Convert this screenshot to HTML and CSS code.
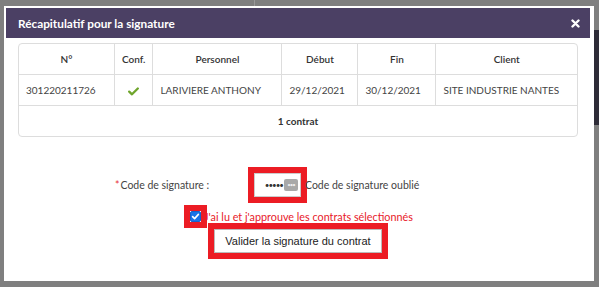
FILE: index.html
```html
<!DOCTYPE html>
<html lang="fr">
<head>
    <meta charset="UTF-8">
    <meta name="viewport" content="width=device-width, initial-scale=1.0">
    <title>Récapitulatif pour la signature</title>
    <link rel="stylesheet" href="styles.css">
</head>
<body>

    <div class="backdrop-strip"></div>
    <div class="side-dark"></div>

    <div class="modal">
        <div class="modal-header">
            <h4>Récapitulatif pour la signature</h4>
            <svg class="close" width="9" height="9" viewBox="0 0 9 9">
                <path d="M1.5 1.5 L7.5 7.5 M7.5 1.5 L1.5 7.5" stroke="#fff" stroke-width="2.4" stroke-linecap="round"/>
            </svg>
        </div>

        <div class="modal-body">
            <table class="recap">
                <thead>
                    <tr>
                        <th class="col-num">N°</th>
                        <th class="col-conf">Conf.</th>
                        <th class="col-pers">Personnel</th>
                        <th class="col-date">Début</th>
                        <th class="col-fin">Fin</th>
                        <th>Client</th>
                    </tr>
                </thead>
                <tbody>
                    <tr>
                        <td>301220211726</td>
                        <td class="center">
                            <svg class="check" width="11" height="9" viewBox="0 0 11 9">
                                <path d="M1.2 4.6 L4 7.3 L9.8 1.5" fill="none" stroke="#6fa52c" stroke-width="2.3" stroke-linecap="round" stroke-linejoin="round"/>
                            </svg>
                        </td>
                        <td>LARIVIERE ANTHONY</td>
                        <td>29/12/2021</td>
                        <td>30/12/2021</td>
                        <td>SITE INDUSTRIE NANTES</td>
                    </tr>
                </tbody>
                <tfoot>
                    <tr>
                        <td colspan="6" class="total">1 contrat</td>
                    </tr>
                </tfoot>
            </table>

            <div class="form-row">
                <label class="code-label"><span class="req">*</span>Code de signature :</label>
                <div class="code-input highlight">
                    <span class="dots">•••••</span>
                    <span class="key">•••</span>
                </div>
                <a class="forgot">Code de signature oublié</a>
            </div>

            <div class="check-row">
                <span class="checkbox highlight">
                    <svg width="11" height="11" viewBox="0 0 11 11">
                        <rect x="0.5" y="0.5" width="10" height="10" rx="1.5" fill="#1a73e8" stroke="#1a60c8"/>
                        <path d="M2.6 5.6 L4.6 7.6 L8.4 3.4" fill="none" stroke="#fff" stroke-width="1.6" stroke-linecap="round" stroke-linejoin="round"/>
                    </svg>
                </span>
                <span class="approve">J'ai lu et j'approuve les contrats sélectionnés</span>
            </div>

            <div class="btn-row">
                <button class="btn-valider highlight">Valider la signature du contrat</button>
            </div>
        </div>
    </div>

</body>
</html>
```

FILE: styles.css
```css
* {
    box-sizing: border-box;
    margin: 0;
    padding: 0;
}
body {
    position: relative;
    width: 599px;
    height: 287px;
    overflow: hidden;
    background: #7f7f7f;
    font-family: Lato, "Open Sans", sans-serif;
    color: #444;
    padding: 6px 0 0 4px;
}
.backdrop-strip {
    position: absolute;
    top: 0;
    left: 254px;
    width: 1px;
    height: 6px;
    background: #999;
}
.side-dark {
    position: absolute;
    top: 30px;
    left: 594px;
    width: 5px;
    height: 95px;
    background: #2e2c38;
}
.modal {
    position: relative;
    width: 590px;
    height: 275px;
    background: #fff;
    padding: 2px 4px 0 2px;
}
.modal-header {
    display: flex;
    align-items: center;
    justify-content: space-between;
    height: 30px;
    background: #4b4064;
    color: #fff;
    padding: 0 10px 0 12px;
}
.modal-header h4 {
    font-size: 11.8px;
    font-weight: 700;
}
.close {
    display: block;
}
.modal-body {
    padding: 5px 12px 0 12px;
}

/* tableau récapitulatif */
.recap {
    width: 560px;
    border-collapse: separate;
    border-spacing: 0;
    border: 1px solid #ddd;
    border-radius: 4px;
    font-size: 10px;
    color: #444;
}
.recap th, .recap td {
    height: 31px;
    padding: 0 7px;
    border-left: 1px solid #ddd;
    border-bottom: 1px solid #ddd;
    text-align: left;
    white-space: nowrap;
}
.recap th:first-child, .recap td:first-child {
    border-left: none;
}
.recap tfoot td {
    border-bottom: none;
    height: 30px;
}
.recap th {
    text-align: center;
    font-weight: 600;
    color: #333;
}
.col-num { width: 95px; }
.col-conf { width: 37px; }
.col-pers { width: 129px; }
.col-date { width: 76px; }
.col-fin { width: 78px; }
.center { text-align: center !important; }
.check { vertical-align: middle; }
.total {
    text-align: center !important;
    font-weight: 700;
    color: #333;
}

/* formulaire */
.highlight {
    outline: 6px solid #ec1c24;
    border-radius: 0 !important;
}
.form-row {
    display: flex;
    align-items: center;
    margin-top: 36px;
    height: 24px;
    font-size: 10.5px;
}
.code-label {
    width: 236px;
    padding-left: 97px;
    color: #444;
}
.req {
    color: #e8323a;
    margin-right: 1px;
}
.code-input {
    display: flex;
    align-items: center;
    justify-content: flex-end;
    width: 47px;
    height: 24px;
    border: 1px solid #ccc;
    padding-right: 2px;
    background: #fff;
}
.dots {
    font-size: 8px;
    letter-spacing: -1px;
    color: #333;
}
.key {
    display: inline-block;
    width: 14px;
    height: 12px;
    margin-left: 1px;
    background: #a9a9a9;
    border-radius: 2px;
    color: #eee;
    font-size: 6px;
    line-height: 12px;
    text-align: center;
    letter-spacing: -1px;
}
.forgot {
    margin-left: 4px;
    color: #444;
}
.check-row {
    display: flex;
    align-items: center;
    margin-top: 12px;
    padding-left: 172px;
    height: 14px;
}
.checkbox {
    display: flex;
    width: 11px;
    height: 11px;
}
.approve {
    margin-left: 3px;
    font-size: 10.8px;
    color: #e8202a;
}
.btn-row {
    margin-top: 6px;
    padding-left: 196px;
}
.btn-valider {
    width: 168px;
    height: 24px;
    background: #fff;
    border: 1px solid #bbb;
    font-family: Arial, "Liberation Sans", sans-serif;
    font-size: 11px;
    color: #222;
}
```
